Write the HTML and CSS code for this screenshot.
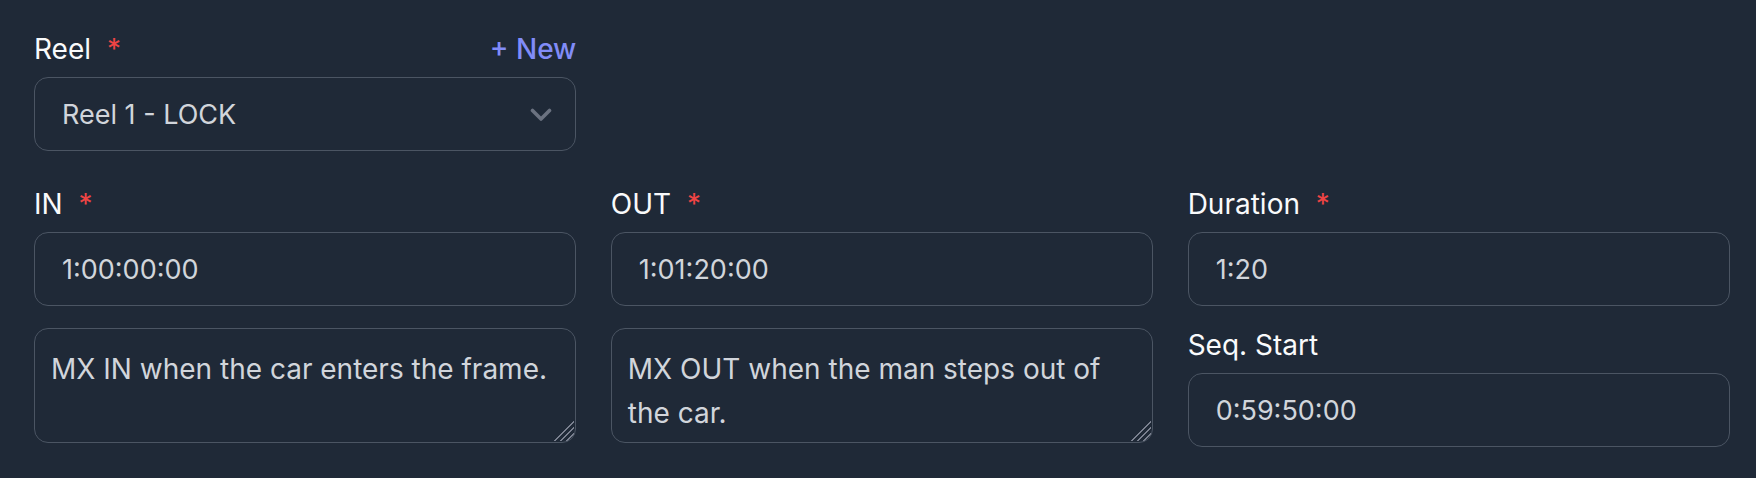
FILE: index.html
```html
<!DOCTYPE html>
<html lang="en">
<head>
	<meta charset="UTF-8">
	<meta name="viewport" content="width=device-width, initial-scale=1.0">
	<title>Cue timing</title>
	<link rel="stylesheet" href="styles.css">
</head>
<body>
	<form class="cue-form">
		<div class="field reel-field">
			<div class="label-row">
				<label for="reel">Reel <span class="req">*</span></label>
				<a href="#" class="add-link">+ New</a>
			</div>
			<div class="select-wrap">
				<select id="reel">
					<option>Reel 1 - LOCK</option>
					<option>Reel 2 - LOCK</option>
				</select>
				<svg class="chevron" width="22" height="14" viewBox="0 0 22 14" aria-hidden="true">
					<polyline points="2.5,2.5 11,11 19.5,2.5" fill="none" stroke="currentColor" stroke-width="3.6" stroke-linecap="round" stroke-linejoin="round"/>
				</svg>
			</div>
		</div>

		<div class="column">
			<div class="field">
				<label for="cue-in">IN <span class="req">*</span></label>
				<input id="cue-in" type="text" value="1:00:00:00">
			</div>
			<textarea class="note">MX IN when the car enters the frame.</textarea>
		</div>

		<div class="column">
			<div class="field">
				<label for="cue-out">OUT <span class="req">*</span></label>
				<input id="cue-out" type="text" value="1:01:20:00">
			</div>
			<textarea class="note">MX OUT when the man steps out of the car.</textarea>
		</div>

		<div class="column">
			<div class="field">
				<label for="duration">Duration <span class="req">*</span></label>
				<input id="duration" type="text" value="1:20">
			</div>
			<div class="field">
				<label for="seq-start">Seq. Start</label>
				<input id="seq-start" type="text" value="0:59:50:00">
			</div>
		</div>
	</form>
</body>
</html>
```

FILE: styles.css
```css
*, *:before, *:after {
	box-sizing: border-box;
}
html {
	font-family: Inter, 'Noto Sans', sans-serif;
}
body {
	margin: 0;
	background: #1f2937;
	color: #f9fafb;
}
.cue-form {
	display: grid;
	grid-template-columns: repeat(3, 1fr);
	column-gap: 34.5px;
	row-gap: 36px;
	padding: 32px 26px 0 34px;
}
.reel-field {
	grid-column: 1;
	grid-row: 1;
}
.column {
	grid-row: 2;
	display: flex;
	flex-direction: column;
	gap: 22px;
}
.field {
	display: flex;
	flex-direction: column;
	gap: 10px;
}
.label-row {
	display: flex;
	justify-content: space-between;
	align-items: center;
}
label {
	font-size: 28px;
	line-height: 35px;
	font-weight: 400;
	color: #f9fafb;
}
.req {
	margin-left: 8px;
	color: #ef4444;
}
.add-link {
	font-size: 28px;
	line-height: 35px;
	font-weight: 500;
	color: #818cf8;
	text-decoration: none;
}
.select-wrap {
	position: relative;
}
select, input, textarea {
	display: block;
	width: 100%;
	font-family: inherit;
	font-size: 27px;
	color: #d1d5db;
	background: #1f2937;
	border: 1px solid #4b5563;
	border-radius: 14px;
	outline: none;
}
select {
	appearance: none;
	height: 74px;
	padding: 0 64px 0 27px;
}
.chevron {
	position: absolute;
	right: 24px;
	top: 31px;
	color: #6b7280;
	pointer-events: none;
}
input {
	height: 74px;
	padding: 16px 27px;
	line-height: 40px;
}
textarea {
	height: 115px;
	padding: 18px 16px 0;
	font-size: 28px;
	line-height: 44px;
	resize: none;
	background:
		linear-gradient(to bottom right, #1f2937 50%, transparent 50%) right 1px bottom 1px / 24px 24px no-repeat,
		repeating-linear-gradient(135deg, transparent 0 2.4px, #7b8190 2.4px 4.2px) right 1px bottom 1px / 24px 24px no-repeat,
		#1f2937;
}
```
